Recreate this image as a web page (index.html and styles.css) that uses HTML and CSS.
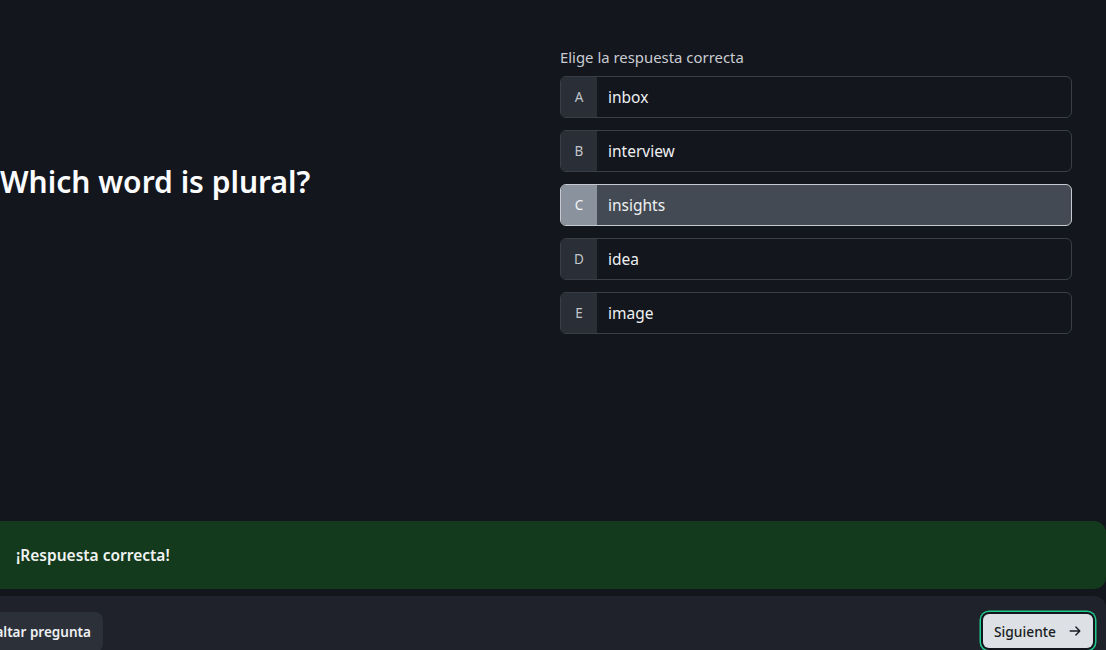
FILE: index.html
```html
<!DOCTYPE html>
<html lang="es">
<head>
<meta charset="utf-8">
<title>Quiz</title>
<link rel="stylesheet" href="styles.css">
</head>
<body>
<div class="app">
  <main class="main">
    <section class="question">
      <h1 class="question-title">Which word is plural?</h1>
    </section>
    <section class="answers">
      <p class="answers-label">Elige la respuesta correcta</p>
      <ul class="options">
        <li class="option"><span class="option-key">A</span><span class="option-text">inbox</span></li>
        <li class="option"><span class="option-key">B</span><span class="option-text">interview</span></li>
        <li class="option option-selected"><span class="option-key">C</span><span class="option-text">insights</span></li>
        <li class="option"><span class="option-key">D</span><span class="option-text">idea</span></li>
        <li class="option"><span class="option-key">E</span><span class="option-text">image</span></li>
      </ul>
    </section>
  </main>
  <div class="feedback">¡Respuesta correcta!</div>
  <footer class="bar">
    <button class="btn-skip">Saltar pregunta</button>
    <button class="btn-next">Siguiente
      <svg class="arrow" viewBox="0 0 16 16" width="14" height="14" fill="none" stroke="currentColor" stroke-width="1.6" stroke-linecap="round" stroke-linejoin="round"><path d="M2.5 8h11M9 3.5 13.5 8 9 12.5"/></svg>
    </button>
  </footer>
</div>
</body>
</html>
```

FILE: styles.css
```css
* { box-sizing: border-box; }
html, body { margin: 0; padding: 0; }
body {
  background: #13161d;
  font-family: "Noto Sans", "Open Sans", sans-serif;
  color: #e8eaed;
  overflow: hidden;
}
.app {
  width: 1106px;
  height: 650px;
  display: flex;
  flex-direction: column;
  overflow: hidden;
}
.main {
  flex: 1;
  display: flex;
  padding-right: 34px;
}
.question {
  flex: 1;
  padding-top: 160px;
}
.question-title {
  margin: 0;
  font-size: 30px;
  font-weight: 600;
  line-height: 44px;
  color: #fbfcfd;
}
.answers {
  width: 512px;
  padding-top: 46px;
}
.answers-label {
  margin: 0 0 8px 0;
  font-size: 14.9px;
  line-height: 22px;
  color: #c9ccd2;
}
.options {
  list-style: none;
  margin: 0;
  padding: 0;
  display: flex;
  flex-direction: column;
  gap: 12px;
}
.option {
  display: flex;
  height: 42px;
  border: 1px solid #393e47;
  border-radius: 6px;
  overflow: hidden;
  background: #13161d;
}
.option-key {
  width: 36px;
  flex: none;
  display: flex;
  align-items: center;
  justify-content: center;
  background: #2a2e36;
  color: #c2c6cc;
  font-size: 13.5px;
}
.option-text {
  display: flex;
  align-items: center;
  padding-left: 11px;
  font-size: 15.5px;
  color: #eef0f2;
}
.option-selected {
  border-color: #c6cad0;
  background: #434a53;
}
.option-selected .option-key {
  background: #89929d;
  color: #f3f5f7;
}
.feedback {
  margin-left: -16px;
  height: 68px;
  flex: none;
  display: flex;
  align-items: center;
  padding-left: 32px;
  background: #133a1c;
  border-radius: 12px;
  font-size: 15.5px;
  font-weight: 600;
  color: #f1f3f2;
}
.bar {
  margin-top: 7px;
  margin-left: -41px;
  height: 54px;
  flex: none;
  background: #1f222a;
  border-radius: 12px 12px 0 0;
  display: flex;
  align-items: flex-start;
  justify-content: space-between;
  padding: 16px 13px 0 16px;
}
.btn-skip {
  height: 40px;
  padding: 0 12px 0 13px;
  border: none;
  border-radius: 8px;
  background: #2c3039;
  color: #eef0f2;
  font-family: inherit;
  font-size: 13.5px;
  font-weight: 600;
}
.btn-next {
  margin-top: 2px;
  height: 34px;
  width: 110px;
  display: flex;
  align-items: center;
  justify-content: center;
  gap: 12px;
  border: none;
  border-radius: 6px;
  background: #dde1e5;
  color: #1a1d23;
  font-family: inherit;
  font-size: 13.8px;
  font-weight: 500;
  box-shadow: 0 0 0 2px #13161d, 0 0 0 3.5px #1fc98c;
}
.arrow { flex: none; }
```
